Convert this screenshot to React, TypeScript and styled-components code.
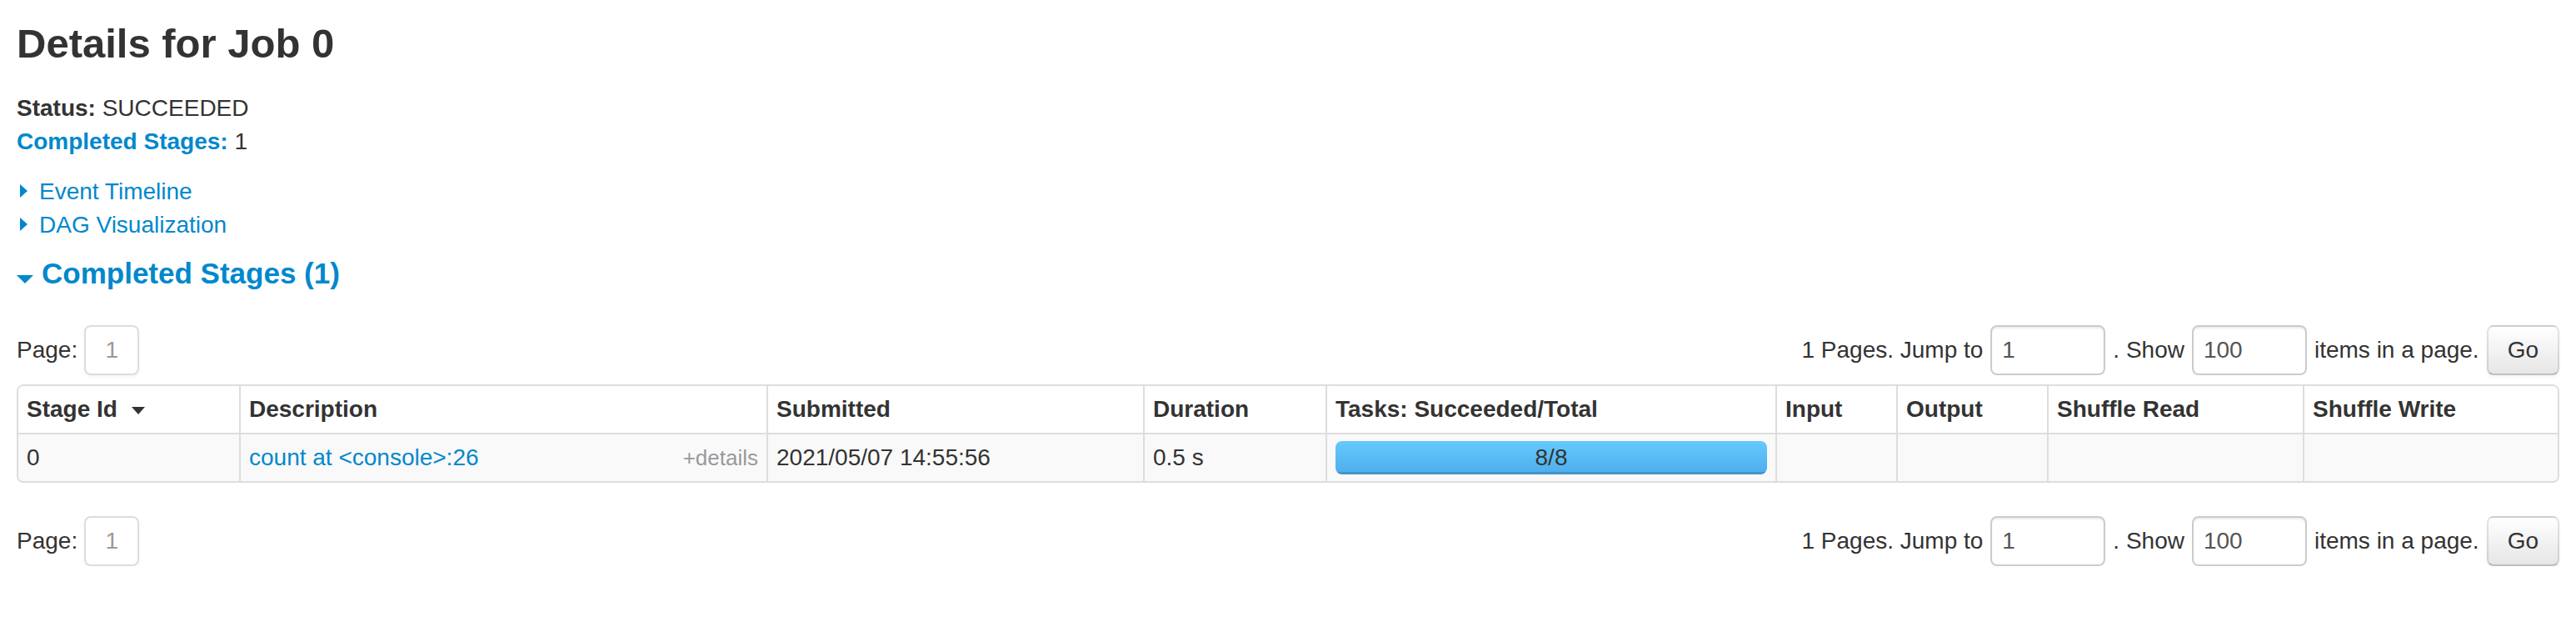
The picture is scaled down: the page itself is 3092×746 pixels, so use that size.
import React from "react";
import styled, { createGlobalStyle } from "styled-components";

const GlobalStyle = createGlobalStyle`
  html, body { margin: 0; padding: 0; background: #ffffff; }
  body {
    font-family: "Liberation Sans", Arial, Helvetica, sans-serif;
    font-size: 28px;
    line-height: 40px;
    color: #333333;
  }
  * { box-sizing: border-box; }
`;

const Page = styled.div`
  padding: 0 20px;
`;

const Title = styled.h3`
  margin: 0;
  padding-top: 12px;
  font-size: 49px;
  line-height: 80px;
  font-weight: bold;
  color: #333333;
`;

const SummaryList = styled.ul`
  list-style: none;
  margin: 18px 0 0;
  padding: 0;
`;

const SummaryItem = styled.li`
  line-height: 40px;
`;

const Label = styled.strong`
  font-weight: bold;
`;

const Link = styled.a`
  color: #0088cc;
  text-decoration: none;
  cursor: pointer;
`;

const Expanders = styled.div`
  margin-top: 20px;
`;

const ExpanderRow = styled.div`
  line-height: 40px;
  color: #0088cc;
`;

const ClosedArrow = styled.span`
  display: inline-block;
  width: 0;
  height: 0;
  border-top: 8px solid transparent;
  border-bottom: 8px solid transparent;
  border-left: 9px solid #0088cc;
  margin-left: 4px;
  margin-right: 14px;
  margin-bottom: 2px;
`;

const SectionHeading = styled.h4`
  margin: 18px 0 0;
  font-size: 35px;
  line-height: 40px;
  font-weight: bold;
  color: #0088cc;
`;

const OpenArrow = styled.span`
  display: inline-block;
  width: 0;
  height: 0;
  border-left: 10px solid transparent;
  border-right: 10px solid transparent;
  border-top: 10px solid #0088cc;
  margin-right: 10px;
`;

const PagingRow = styled.div<{ $top: number }>`
  display: flex;
  justify-content: space-between;
  align-items: center;
  height: 60px;
  margin-top: ${(p) => p.$top}px;
`;

const PageLeft = styled.div`
  display: flex;
  align-items: center;
`;

const PageLabel = styled.span`
  margin-right: 8px;
`;

const PageBox = styled.span`
  display: inline-flex;
  align-items: center;
  justify-content: center;
  width: 66px;
  height: 60px;
  border: 2px solid #dddddd;
  border-radius: 8px;
  color: #999999;
  background: #ffffff;
  box-shadow: 0 2px 4px rgba(0, 0, 0, 0.05);
`;

const PageForm = styled.form`
  display: flex;
  align-items: center;
  gap: 9px;
  margin: 0;
`;

const FormText = styled.span`
  white-space: nowrap;
`;

const PageInput = styled.input`
  width: 138px;
  height: 60px;
  padding: 8px 12px;
  border: 2px solid #cccccc;
  border-radius: 8px;
  font-family: "Liberation Sans", Arial, Helvetica, sans-serif;
  font-size: 28px;
  line-height: 40px;
  color: #555555;
  background: #ffffff;
  box-shadow: inset 0 2px 2px rgba(0, 0, 0, 0.075);
  outline: none;
`;

const GoButton = styled.button`
  height: 60px;
  padding: 0 23px;
  border: 2px solid;
  border-color: rgba(0, 0, 0, 0.1) rgba(0, 0, 0, 0.1) rgba(0, 0, 0, 0.25);
  border-radius: 8px;
  background: linear-gradient(#ffffff, #e6e6e6);
  font-family: "Liberation Sans", Arial, Helvetica, sans-serif;
  font-size: 28px;
  line-height: 40px;
  color: #333333;
  box-shadow: inset 0 2px 0 rgba(255, 255, 255, 0.2), 0 2px 4px rgba(0, 0, 0, 0.05);
  cursor: pointer;
`;

const Table = styled.table`
  width: 100%;
  table-layout: fixed;
  border-collapse: separate;
  border-spacing: 0;
  border: 2px solid #dddddd;
  border-radius: 8px;
  margin-top: 11px;
`;

const HeadCell = styled.th<{ $w: number }>`
  width: ${(p) => p.$w}px;
  padding: 8px 10px;
  text-align: left;
  font-weight: bold;
  line-height: 40px;
  vertical-align: top;
  background: #ffffff;
  border-left: 2px solid #dddddd;
  white-space: nowrap;
  &:first-child { border-left: 0; border-top-left-radius: 6px; }
  &:last-child { border-top-right-radius: 6px; }
`;

const BodyRow = styled.tr`
  background: #f9f9f9;
`;

const Cell = styled.td`
  padding: 8px 10px;
  line-height: 40px;
  vertical-align: top;
  border-top: 2px solid #dddddd;
  border-left: 2px solid #dddddd;
  background: #f9f9f9;
  white-space: nowrap;
  &:first-child { border-left: 0; border-bottom-left-radius: 6px; }
  &:last-child { border-bottom-right-radius: 6px; }
`;

const SortArrow = styled.span`
  display: inline-block;
  width: 0;
  height: 0;
  border-left: 8px solid transparent;
  border-right: 8px solid transparent;
  border-top: 9px solid #333333;
  margin-left: 17px;
  margin-bottom: 3px;
`;

const Details = styled.span`
  float: right;
  font-size: 26px;
  color: #999999;
  cursor: pointer;
`;

const Progress = styled.div`
  position: relative;
  height: 40px;
  border-radius: 8px;
  overflow: hidden;
  background: linear-gradient(#f5f5f5, #f9f9f9);
  box-shadow: inset 0 2px 4px rgba(0, 0, 0, 0.1);
`;

const ProgressBar = styled.div`
  height: 100%;
  background: linear-gradient(#65cafd, #4eacec);
  box-shadow: inset 0 -3px 0 rgba(0, 0, 0, 0.15);
`;

const ProgressText = styled.span`
  position: absolute;
  left: 0;
  top: 0;
  width: 100%;
  text-align: center;
  line-height: 40px;
  color: #333333;
`;

const columns = [
  { label: "Stage Id", w: 265, sort: true },
  { label: "Description", w: 633 },
  { label: "Submitted", w: 452 },
  { label: "Duration", w: 219 },
  { label: "Tasks: Succeeded/Total", w: 540 },
  { label: "Input", w: 145 },
  { label: "Output", w: 181 },
  { label: "Shuffle Read", w: 307 },
  { label: "Shuffle Write", w: 306 },
];

const Paging: React.FC<{ top: number }> = ({ top }) => (
  <PagingRow $top={top}>
    <PageLeft>
      <PageLabel>Page:</PageLabel>
      <PageBox>1</PageBox>
    </PageLeft>
    <PageForm onSubmit={(e) => e.preventDefault()}>
      <FormText>1 Pages. Jump to</FormText>
      <PageInput type="text" defaultValue="1" />
      <FormText>. Show</FormText>
      <PageInput type="text" defaultValue="100" />
      <FormText>items in a page.</FormText>
      <GoButton type="submit">Go</GoButton>
    </PageForm>
  </PagingRow>
);

export default function App() {
  const succeeded = 8;
  const total = 8;
  return (
    <>
      <GlobalStyle />
      <Page>
        <Title>Details for Job 0</Title>
        <SummaryList>
          <SummaryItem>
            <Label>Status:</Label> SUCCEEDED
          </SummaryItem>
          <SummaryItem>
            <Link>
              <Label>Completed Stages:</Label>
            </Link>{" "}
            1
          </SummaryItem>
        </SummaryList>
        <Expanders>
          <ExpanderRow>
            <ClosedArrow />
            <Link>Event Timeline</Link>
          </ExpanderRow>
          <ExpanderRow>
            <ClosedArrow />
            <Link>DAG Visualization</Link>
          </ExpanderRow>
        </Expanders>
        <SectionHeading>
          <OpenArrow />
          <Link>Completed Stages (1)</Link>
        </SectionHeading>
        <Paging top={42} />
        <Table>
          <thead>
            <tr>
              {columns.map((c) => (
                <HeadCell key={c.label} $w={c.w}>
                  {c.label}
                  {c.sort && <SortArrow />}
                </HeadCell>
              ))}
            </tr>
          </thead>
          <tbody>
            <BodyRow>
              <Cell>0</Cell>
              <Cell>
                <Details>+details</Details>
                <Link>count at &lt;console&gt;:26</Link>
              </Cell>
              <Cell>2021/05/07 14:55:56</Cell>
              <Cell>0.5 s</Cell>
              <Cell>
                <Progress>
                  <ProgressBar style={{ width: `${(succeeded / total) * 100}%` }} />
                  <ProgressText>
                    {succeeded}/{total}
                  </ProgressText>
                </Progress>
              </Cell>
              <Cell />
              <Cell />
              <Cell />
              <Cell />
            </BodyRow>
          </tbody>
        </Table>
        <Paging top={40} />
      </Page>
    </>
  );
}
